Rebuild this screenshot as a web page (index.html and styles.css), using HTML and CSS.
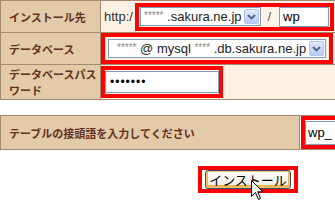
FILE: index.html
```html
<!DOCTYPE html>
<html lang="ja">
<head>
    <meta charset="UTF-8">
    <title>インストール</title>
    <link rel="stylesheet" href="styles.css">
</head>
<body>
    <form class="setup">
        <table class="form-table">
            <tr class="row-site">
                <th>インストール先</th>
                <td>
                    <span class="url-prefix">http:/</span><span class="mark mark-site">
                        <span class="fake-select select-domain">
                            <span class="select-text"><span class="masked">*****</span> .sakura.ne.jp</span>
                            <span class="select-btn"><svg width="9" height="6" viewBox="0 0 9 6"><path d="M1 1 L4.5 4.5 L8 1" fill="none" stroke="#4d6185" stroke-width="1.8"/></svg></span>
                        </span>
                        <span class="slash">/</span>
                        <input class="text-input dir-input" type="text" value="wp">
                    </span>
                </td>
            </tr>
            <tr class="row-db">
                <th>データベース</th>
                <td>
                    <span class="mark mark-db">
                        <span class="fake-select select-db">
                            <span class="select-text"><span class="masked">*****</span> @ mysql <span class="masked">****</span> .db.sakura.ne.jp</span>
                            <span class="select-btn"><svg width="9" height="6" viewBox="0 0 9 6"><path d="M1 1 L4.5 4.5 L8 1" fill="none" stroke="#4d6185" stroke-width="1.8"/></svg></span>
                        </span>
                    </span>
                </td>
            </tr>
            <tr class="row-pass">
                <th class="two-lines">データベースパス<br>ワード</th>
                <td>
                    <span class="mark mark-pass">
                        <input class="text-input pass-input" type="password" value="1234567">
                    </span>
                </td>
            </tr>
        </table>

        <table class="form-table prefix-table">
            <tr>
                <th>テーブルの接頭語を入力してください</th>
                <td>
                    <span class="mark mark-prefix">
                        <input class="text-input prefix-input" type="text" value="wp_">
                    </span>
                </td>
            </tr>
        </table>

        <div class="actions">
            <span class="mark mark-btn">
                <button type="button" class="install-btn">インストール</button>
            </span>
            <svg class="cursor" width="13" height="21" viewBox="0 0 13 21">
                <path d="M0.5 0.5 L0.5 16.5 L4.5 12.5 L7.5 19.5 L9.5 18.5 L6.8 11.8 L12 11.8 Z" fill="#fff" stroke="#000" stroke-width="1"/>
            </svg>
        </div>
    </form>
</body>
</html>
```

FILE: styles.css
```css
:root {
    --label-bg: #e3cba9;
    --value-bg: #fdf1e3;
    --border-color: #a38a70;
    --label-color: #62321f;
    --mark: #f00;
}

* {
    margin: 0;
    padding: 0;
    box-sizing: border-box;
}

html, body {
    overflow: hidden;
}

body {
    background: #fff;
    font-family: "Liberation Sans", "Noto Sans CJK JP", sans-serif;
    font-size: 13px;
    color: #000;
}

.setup {
    position: relative;
    width: 335px;
    height: 203px;
}

.form-table {
    border-collapse: collapse;
    width: 340px;
}

.form-table th,
.form-table td {
    border: 1px solid var(--border-color);
    vertical-align: middle;
}

.form-table th {
    width: 100px;
    background: var(--label-bg);
    color: var(--label-color);
    font-family: "Noto Sans CJK JP", sans-serif;
    font-size: 11px;
    font-weight: bold;
    text-align: left;
    line-height: 14px;
    padding: 0 0 0 8px;
    white-space: nowrap;
}

.form-table th.two-lines {
    line-height: 16px;
}

.form-table td {
    background: var(--value-bg);
    padding: 0;
    white-space: nowrap;
}

.row-site th, .row-site td { height: 32px; }
.row-db th, .row-db td { height: 32px; }
.row-pass th, .row-pass td { height: 35px; }

.url-prefix {
    display: inline-block;
    padding-left: 3px;
    width: 34px;
    color: #333;
    vertical-align: middle;
}

.mark {
    display: inline-flex;
    align-items: center;
    border: 4px solid var(--mark);
    vertical-align: middle;
}

.mark-site {
    width: 199px;
    height: 28px;
    padding: 0 1px;
}

.mark-db {
    width: 232px;
    height: 31px;
    padding: 0 3px;
}

.mark-pass {
    width: 122px;
    height: 32px;
    padding: 0;
}

.fake-select {
    display: inline-flex;
    align-items: center;
    justify-content: space-between;
    background: #fff;
    border: 1px solid #7f9db9;
    height: 19px;
    padding: 0 1px 0 3px;
    font-size: 13px;
    color: #222;
}

.select-domain { width: 125px; }
.select-db { width: 224px; padding-left: 8px; }

.masked {
    color: #8a8a8a;
    font-size: 10px;
    vertical-align: 2px;
}

.select-btn {
    display: inline-flex;
    align-items: center;
    justify-content: center;
    width: 15px;
    height: 15px;
    background: linear-gradient(#dfe8fb, #b7c9f4);
    border: 1px solid #b4c7f0;
    border-radius: 2px;
}

.slash {
    color: #555;
    margin: 0 8px 0 6px;
}

.text-input {
    font-family: "Liberation Sans", sans-serif;
    font-size: 13px;
    color: #000;
    background: #fff;
    border: 1px solid #7f9db9;
    outline: none;
    height: 20px;
    padding: 0 3px;
}

.dir-input { width: 50px; }

.pass-input {
    width: 114px;
    height: 22px;
    font-size: 12px;
    letter-spacing: 1px;
    padding-left: 4px;
}

.prefix-table {
    margin-top: 15px;
}

.prefix-table th {
    width: 299px;
    height: 34px;
}

.prefix-table td {
    background: #fff;
    padding-left: 1px;
}

.mark-prefix {
    width: 38px;
    height: 33px;
    padding: 0;
}

.prefix-input {
    width: 34px;
    height: 24px;
    padding: 0 2px;
}

.actions {
    padding: 16px 0 0 198px;
}

.mark-btn {
    width: 100px;
    height: 27px;
    padding: 0 3px;
}

.install-btn {
    width: 92px;
    height: 19px;
    font-family: "Noto Sans CJK JP", sans-serif;
    font-size: 13px;
    line-height: 15px;
    color: #000;
    background: linear-gradient(#fffffd, #f3f1e8 70%, #e4dfcd);
    border: 1px solid #2c4f6f;
    border-radius: 3px;
    box-shadow: inset 0 0 0 1px #f7c86a, inset 0 -1px 0 2px #f1b64d;
}

.cursor {
    position: absolute;
    left: 251px;
    top: 180px;
}
```
